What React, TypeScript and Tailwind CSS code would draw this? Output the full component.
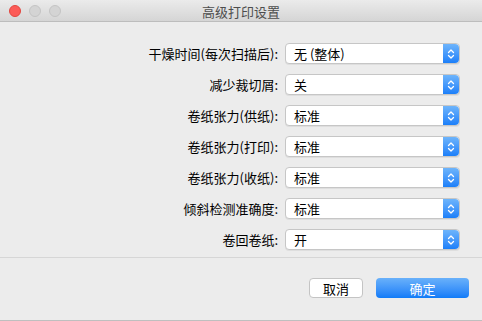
import { useState } from "react";

interface Row {
    label: string;
    value: string;
}

const rows: Row[] = [
    { label: "干燥时间(每次扫描后):", value: "无 (整体)" },
    { label: "减少裁切屑:", value: "关" },
    { label: "卷纸张力(供纸):", value: "标准" },
    { label: "卷纸张力(打印):", value: "标准" },
    { label: "卷纸张力(收纸):", value: "标准" },
    { label: "倾斜检测准确度:", value: "标准" },
    { label: "卷回卷纸:", value: "开" },
];

const Stepper = () => (
    <div className="flex h-full w-[16px] items-center justify-center rounded-r-[4px] bg-gradient-to-b from-[#6db4fb] to-[#1a7ff9]">
        <svg width="8" height="12" viewBox="0 0 8 12" fill="none">
            <path d="M1.5 4.5 L4 2 L6.5 4.5" stroke="white" strokeWidth="1.3" strokeLinecap="round" strokeLinejoin="round" />
            <path d="M1.5 7.5 L4 10 L6.5 7.5" stroke="white" strokeWidth="1.3" strokeLinecap="round" strokeLinejoin="round" />
        </svg>
    </div>
);

export default function App() {
    const [values] = useState(rows);

    return (
        <div
            className="flex h-[321px] w-[482px] flex-col overflow-hidden bg-[#ececec] text-[13px] text-black"
            style={{ fontFamily: '"Noto Sans CJK SC", "Noto Sans", "Liberation Sans", sans-serif' }}
        >
            {/* title bar */}
            <div className="relative flex h-[22px] items-center justify-center border-b border-[#bdbdbd] bg-gradient-to-b from-[#ebebeb] to-[#d5d5d5]">
                <div className="absolute left-[9px] top-[5px] flex gap-[8px]">
                    <div className="h-[12px] w-[12px] rounded-full border border-[#e2463f] bg-[#fc5b57]" />
                    <div className="h-[12px] w-[12px] rounded-full border border-[#c4c4c4] bg-[#d4d4d4]" />
                    <div className="h-[12px] w-[12px] rounded-full border border-[#c4c4c4] bg-[#d4d4d4]" />
                </div>
                <span className="pt-[1px] text-[13px] leading-none text-[#4d4d4d]">高级打印设置</span>
            </div>

            {/* settings */}
            <div className="flex flex-col gap-[10px] pt-[21px]">
                {values.map((row, i) => (
                    <div key={i} className="flex h-[21px] items-center">
                        <div className="w-[279px] pr-[1px] text-right leading-none">{row.label}</div>
                        <div className="ml-[6px] flex h-[21px] w-[175px] items-stretch rounded-[4px] border border-[#c6c6c6] bg-white shadow-[0_1px_0_rgba(0,0,0,0.06)]">
                            <div className="flex flex-1 items-center pl-[8px] leading-none">{row.value}</div>
                            <Stepper />
                        </div>
                    </div>
                ))}
            </div>

            <div className="mt-[7px] border-b border-[#d6d6d6]" />

            {/* buttons */}
            <div className="flex justify-end gap-[13px] pr-[13px] pt-[20px]">
                <button className="flex h-[20px] w-[54px] items-center justify-center rounded-[4px] border border-[#c4c4c4] bg-white leading-none">
                    取消
                </button>
                <button className="flex h-[20px] w-[93px] items-center justify-center rounded-[4px] bg-gradient-to-b from-[#69b1fa] to-[#0d7bf8] leading-none text-white">
                    确定
                </button>
            </div>

            <div className="mt-auto h-[3px] border-b border-[#bfbfbf] bg-[#ececec]" />
        </div>
    );
}
